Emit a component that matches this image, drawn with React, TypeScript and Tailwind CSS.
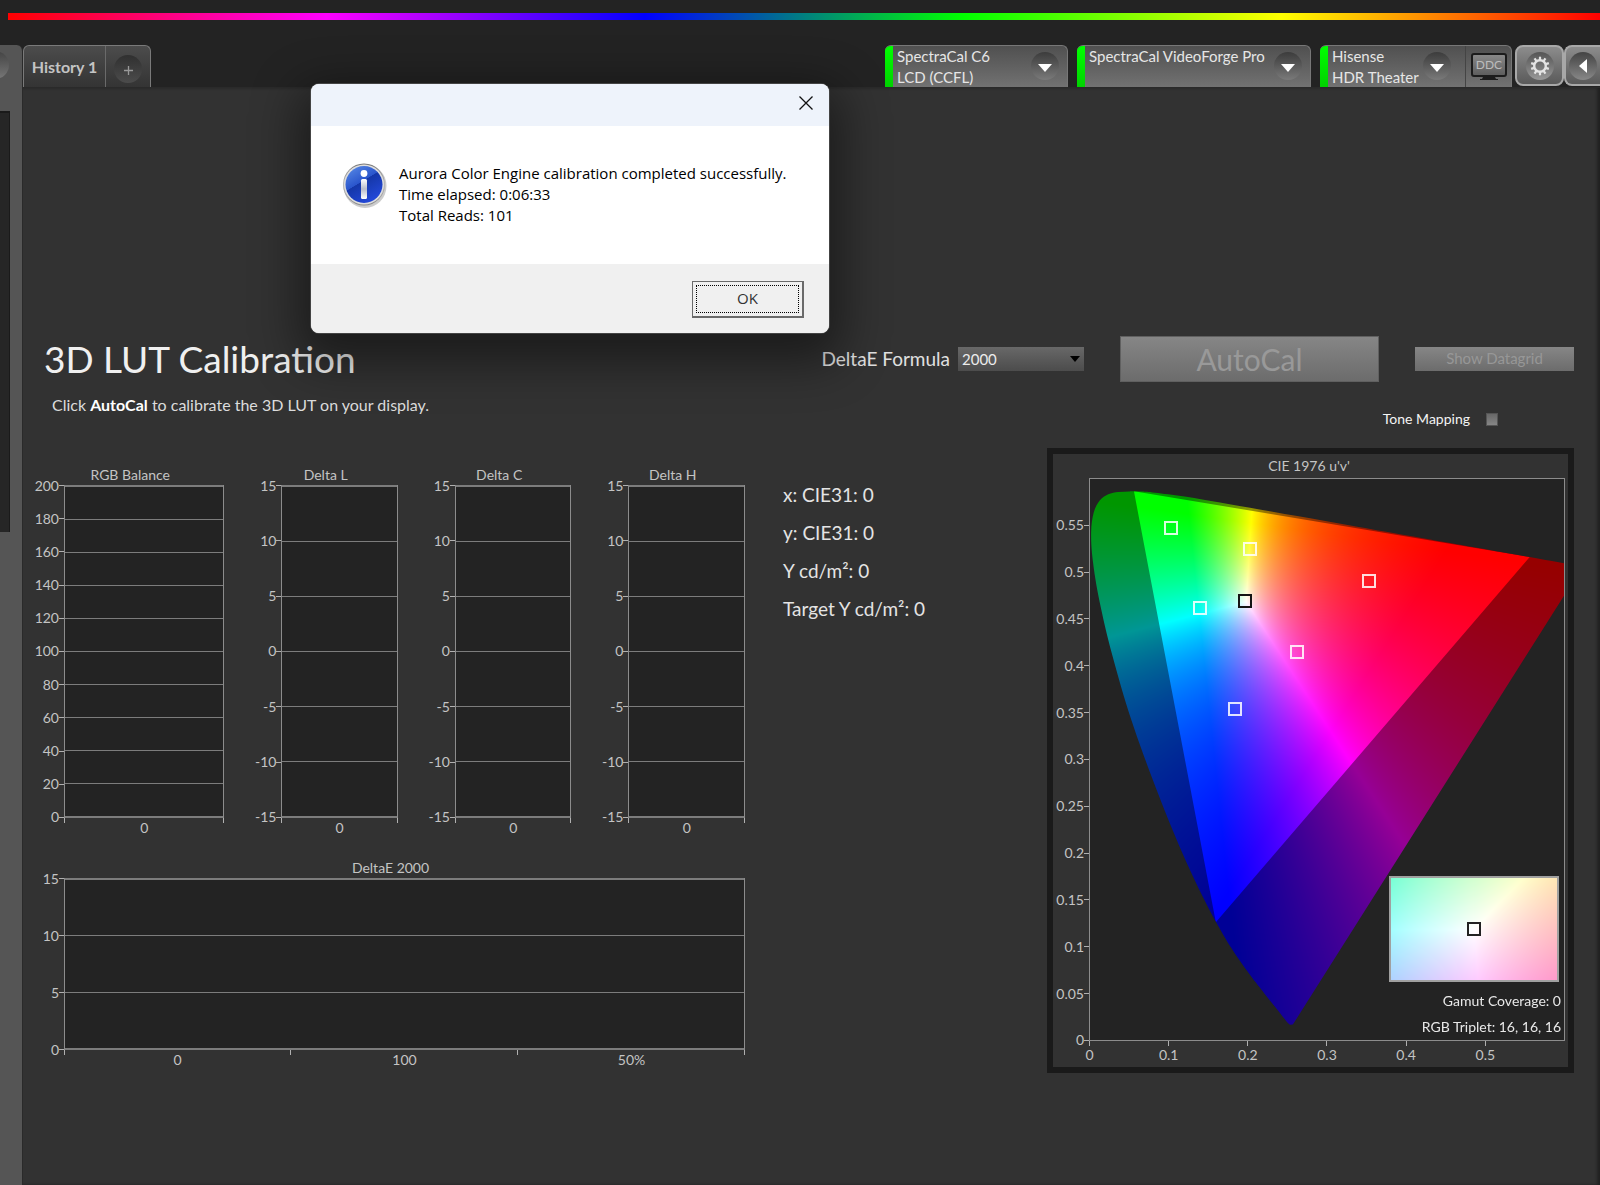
import { useLayoutEffect, useRef } from "react";

type Painter = (px: number, py: number, w: number, h: number) => [number, number];

// CIE 1931 xy of the spectral locus, 380nm to 700nm
const LOCUS = [
  [0.1741, 0.005], [0.1714, 0.0051], [0.1689, 0.0069], [0.1644, 0.0109], [0.1566, 0.0177],
  [0.151, 0.0227], [0.144, 0.0297], [0.1355, 0.0399], [0.1241, 0.0578], [0.1096, 0.0868],
  [0.0913, 0.1327], [0.0687, 0.2007], [0.0454, 0.295], [0.0235, 0.4127], [0.0082, 0.5384],
  [0.0039, 0.6548], [0.0139, 0.7502], [0.0389, 0.812], [0.0743, 0.8338], [0.1142, 0.8262],
  [0.1547, 0.8059], [0.1929, 0.7816], [0.2296, 0.7543], [0.3016, 0.6923], [0.3731, 0.6245],
  [0.4441, 0.5547], [0.5125, 0.4866], [0.5752, 0.4242], [0.627, 0.3725], [0.6915, 0.3083],
  [0.719, 0.2809], [0.7347, 0.2653],
];

const BT2020 = [
  [0.708, 0.292],
  [0.17, 0.797],
  [0.131, 0.046],
];

const MARKERS = [
  { u: 0.103, v: 0.548, border: "border-white/85" },
  { u: 0.2025, v: 0.525, border: "border-white/85" },
  { u: 0.353, v: 0.491, border: "border-white/85" },
  { u: 0.139, v: 0.462, border: "border-white/85" },
  { u: 0.262, v: 0.415, border: "border-white/85" },
  { u: 0.183, v: 0.354, border: "border-white/85" },
  { u: 0.1965, v: 0.47, border: "border-[#151515]" },
];

const toUv = ([x, y]: number[]) => {
  const d = -2 * x + 12 * y + 3;
  return [(4 * x) / d, (9 * y) / d];
};

const xyToRgb = (x: number, y: number, gamma: number) => {
  const X = x / y;
  const Z = (1 - x - y) / y;
  const rgb = [
    3.2406 * X - 1.5372 - 0.4986 * Z,
    -0.9689 * X + 1.8758 + 0.0415 * Z,
    0.0557 * X - 0.204 + 1.057 * Z,
  ].map((c) => Math.max(0, c));
  const max = Math.max(...rgb);
  return rgb.map((c) => Math.round(255 * Math.pow(c / max, 1 / gamma)));
};

function paint(canvas: HTMLCanvasElement, gamma: number, toXy: Painter) {
  const { width, height } = canvas;
  const ctx = canvas.getContext("2d")!;
  const image = ctx.createImageData(width, height);
  for (let j = 0; j < height; j++) {
    for (let i = 0; i < width; i++) {
      const [x, y] = toXy(i + 0.5, j + 0.5, width, height);
      const [r, g, b] = xyToRgb(x, y, gamma);
      image.data.set([r, g, b, 255], (j * width + i) * 4);
    }
  }
  ctx.putImageData(image, 0, 0);
  return ctx;
}

const toPixels = (points: number[][], w: number, h: number) =>
  points.map(toUv).map(([u, v]) => [(u / 0.6) * w, h - (v / 0.6) * h]);

function polygon(points: number[][]) {
  const path = new Path2D();
  points.forEach(([x, y]) => path.lineTo(x, y));
  path.closePath();
  return path;
}

// Catmull-Rom through every point, straight line back to the start
function smooth(points: number[][]) {
  const path = new Path2D();
  path.moveTo(points[0][0], points[0][1]);
  for (let i = 0; i < points.length - 1; i++) {
    const a = points[Math.max(0, i - 1)];
    const b = points[i];
    const c = points[i + 1];
    const d = points[Math.min(points.length - 1, i + 2)];
    path.bezierCurveTo(
      b[0] + (c[0] - a[0]) / 6,
      b[1] + (c[1] - a[1]) / 6,
      c[0] - (d[0] - b[0]) / 6,
      c[1] - (d[1] - b[1]) / 6,
      c[0],
      c[1],
    );
  }
  path.closePath();
  return path;
}

function LocusCanvas() {
  const ref = useRef<HTMLCanvasElement>(null);
  useLayoutEffect(() => {
    const canvas = ref.current!;
    const { width: w, height: h } = canvas;
    const ctx = paint(canvas, 1, (px, py) => {
      const u = (px / w) * 0.6;
      const v = (1 - py / h) * 0.6;
      const d = 6 * u - 16 * v + 12;
      return [(9 * u) / d, (4 * v) / d];
    });

    // dim everything outside the BT.2020 triangle
    const outside = new Path2D();
    outside.rect(0, 0, w, h);
    outside.addPath(polygon(toPixels(BT2020, w, h)));
    ctx.fillStyle = "rgba(0,0,0,0.41)";
    ctx.fill(outside, "evenodd");

    ctx.globalCompositeOperation = "destination-in";
    ctx.fillStyle = "#000";
    ctx.fill(smooth(toPixels(LOCUS, w, h)));
  }, []);
  return <canvas ref={ref} width={474} height={561} className="block h-full w-full" />;
}

function WhitePointCanvas() {
  const ref = useRef<HTMLCanvasElement>(null);
  useLayoutEffect(() => {
    paint(ref.current!, 2.2, (px, py, w, h) => [0.2627 + (px / w) * 0.1, 0.379 - (py / h) * 0.1]);
  }, []);
  return <canvas ref={ref} width={164} height={102} className="block h-full w-full" />;
}

function YAxis({ labels, width }: { labels: string[]; width: string }) {
  return (
    <div className={`flex flex-none flex-col justify-between ${width}`}>
      {labels.map((label, i) => (
        <div key={i} className="flex h-px items-center justify-end">
          <span>{label}</span>
          {label && <span className="h-px w-[5px] flex-none bg-[#b0b0b0]" />}
        </div>
      ))}
    </div>
  );
}

function BarChart({
  title,
  yLabels,
  xLabels,
  height,
}: {
  title: string;
  yLabels: string[];
  xLabels: string[];
  height: string;
}) {
  return (
    <section>
      <h2 className="text-center leading-5">{title}</h2>
      <div className={`flex ${height}`}>
        <YAxis labels={yLabels} width="w-7" />
        <div className="flex flex-1 flex-col justify-between border-x border-[#8c8c8c] bg-[#232323]">
          {yLabels.map((label) => (
            <div key={label} className="h-px bg-[#7c7c7c] first:h-0.5 last:h-0.5" />
          ))}
        </div>
      </div>
      <div className="ml-7 flex h-5 bg-[linear-gradient(#b0b0b0,#b0b0b0)] bg-[length:1px_5px] bg-no-repeat">
        {xLabels.map((label) => (
          <div
            key={label}
            className="flex-1 bg-[linear-gradient(#b0b0b0,#b0b0b0)] bg-[length:1px_5px] bg-right-top bg-no-repeat text-center leading-5"
          >
            {label}
          </div>
        ))}
      </div>
    </section>
  );
}

function CieChart() {
  const yLabels = ["", "0.55", "0.5", "0.45", "0.4", "0.35", "0.3", "0.25", "0.2", "0.15", "0.1", "0.05", "0"];
  const xLabels = ["0", "0.1", "0.2", "0.3", "0.4", "0.5", ""];
  return (
    <section className="border-[6px] border-[#1a1a1a] pr-[3px]">
      <h2 className="text-center leading-6">CIE 1976 u'v'</h2>
      <div className="flex h-[563px]">
        <YAxis labels={yLabels} width="w-9" />
        <div className="relative flex-1 border border-[#8c8c8c] bg-[#232323]">
          <LocusCanvas />
          {MARKERS.map((m) => (
            <span
              key={m.u}
              className={`absolute size-[14px] -translate-x-1/2 translate-y-1/2 border-2 ${m.border}`}
              style={{ left: `${(m.u / 0.6) * 100}%`, bottom: `${(m.v / 0.6) * 100}%` }}
            />
          ))}
          <div className="absolute right-[3px] bottom-0 flex flex-col items-end leading-[26px] text-[#e8e8e8]">
            <div className="relative mr-[2px] mb-[6px] h-[106px] w-[170px] border-2 border-[#a0a0a0]">
              <WhitePointCanvas />
              <span className="absolute top-1/2 left-1/2 size-[14px] -translate-1/2 border-2 border-[#222]" />
            </div>
            <p>Gamut Coverage: 0</p>
            <p>RGB Triplet: 16, 16, 16</p>
          </div>
        </div>
      </div>
      <div className="ml-9 flex h-[26px] justify-between">
        {xLabels.map((label, i) => (
          <div key={i} className="flex w-px flex-col items-center">
            {label && <span className="h-[5px] w-px flex-none bg-[#b0b0b0]" />}
            <span className="leading-[18px]">{label}</span>
          </div>
        ))}
      </div>
    </section>
  );
}

function RoundArrow() {
  return (
    <span className="flex size-7 flex-none items-center justify-center rounded-full bg-linear-to-b from-[#3c3c3c] to-[#7a7a7a]">
      <svg width="14" height="8" viewBox="0 0 14 8" fill="#fff" className="mt-1">
        <path d="M0 0h14L7 8z" />
      </svg>
    </span>
  );
}

function DeviceTab({ lines, box, children }: { lines: string[]; box: string; children?: React.ReactNode }) {
  return (
    <div
      className={`flex overflow-hidden rounded-t-md border-t border-r border-[#777] bg-linear-to-b from-[#505050] to-[#727272] ${box}`}
    >
      <span className="w-2 flex-none bg-linear-to-b from-[#00ff00] to-[#00d200]" />
      <button className={`flex flex-1 items-start pl-1 text-left ${children ? "pr-[14px]" : "pr-2"}`}>
        <span className="flex-1 text-[15px] leading-[21px] whitespace-nowrap text-[#e6e6e6]">
          {lines.map((line) => (
            <span key={line} className="block">
              {line}
            </span>
          ))}
        </span>
        <span className="pt-[6px]">
          <RoundArrow />
        </span>
      </button>
      {children}
    </div>
  );
}

function Header() {
  return (
    <div className="flex h-[42px] items-stretch">
      <div className="flex rounded-t-md border border-b-0 border-[#7a7a7a] bg-linear-to-b from-[#4c4c4c] to-[#343434]">
        <button className="w-[82px] border-r border-[#6a6a6a] pt-px text-base font-bold text-[#c4c4c4]">History 1</button>
        <button aria-label="Add history" className="flex w-11 items-center justify-center">
          <span className="mt-1 flex size-7 items-center justify-center rounded-full bg-linear-to-b from-[#303030] to-[#4c4c4c]">
            <svg width="9" height="9" viewBox="0 0 9 9" stroke="#999" strokeWidth="1.3" className="mt-1">
              <path d="M4.5 0v9M0 4.5h9" />
            </svg>
          </span>
        </button>
      </div>

      <div className="ml-auto flex">
        <DeviceTab box="w-[183px]" lines={["SpectraCal C6", "LCD (CCFL)"]} />
        <DeviceTab box="ml-[9px] w-[234px]" lines={["SpectraCal VideoForge Pro"]} />
        <DeviceTab box="ml-[9px] w-[192px]" lines={["Hisense", "HDR Theater"]}>
          <button className="flex w-[46px] items-center justify-center border-l border-[#444]">
            <svg width="36" height="28" viewBox="0 0 36 28">
              <defs>
                <linearGradient id="screen" x1="0" y1="0" x2="0" y2="1">
                  <stop offset="0" stopColor="#8a8a8a" />
                  <stop offset="1" stopColor="#5c5c5c" />
                </linearGradient>
              </defs>
              <rect x="1" y="1" width="34" height="22" rx="2" fill="url(#screen)" stroke="#1c1c1c" strokeWidth="2" />
              <path d="M12 24h12l1 2h2v1H9v-1h2z" fill="#1c1c1c" />
              <text x="18" y="16" textAnchor="middle" fontSize="12" fontFamily="Lato" fill="#bcbcbc">
                DDC
              </text>
            </svg>
          </button>
        </DeviceTab>
      </div>

      <div className="ml-[3px] flex h-[41px] flex-none">
        <button
          aria-label="Settings"
          className="flex w-[49px] items-center justify-center rounded-lg border-2 border-[#a8a8a8] bg-linear-to-b from-[#8c8c8c] to-[#5a5a5a]"
        >
          <span className="flex size-7 items-center justify-center rounded-full bg-linear-to-b from-[#555] to-[#999]">
            <svg width="20" height="20" viewBox="-10 -10 20 20" fill="none" stroke="#e4e4e4">
              <circle r="5.8" strokeWidth="2.4" />
              {[0, 36, 72, 108, 144, 180, 216, 252, 288, 324].map((a) => (
                <path key={a} d="M0 -6v-3.300" strokeWidth="2.2" transform={`rotate(${a})`} />
              ))}
            </svg>
          </span>
        </button>
        <button
          aria-label="Collapse"
          className="flex w-9 items-center justify-center rounded-l-lg border-2 border-r-0 border-[#a8a8a8] bg-linear-to-b from-[#8c8c8c] to-[#5a5a5a]"
        >
          <span className="flex size-7 items-center justify-center rounded-full bg-linear-to-b from-[#444] to-[#888]">
            <svg width="8" height="14" viewBox="0 0 8 14" fill="#fff">
              <path d="M8 0v14L0 7z" />
            </svg>
          </span>
        </button>
      </div>
    </div>
  );
}

function InfoIcon() {
  return (
    <svg width="44" height="46" viewBox="0 0 44 46" className="flex-none">
      <defs>
        <linearGradient id="ball" x1="0" y1="0" x2="0.6" y2="1">
          <stop offset="0" stopColor="#5c8fe8" />
          <stop offset="0.5" stopColor="#2a55cc" />
          <stop offset="0.51" stopColor="#1537a8" />
          <stop offset="1" stopColor="#2348d8" />
        </linearGradient>
        <linearGradient id="rim" x1="0" y1="0" x2="0" y2="1">
          <stop offset="0" stopColor="#777" />
          <stop offset="0.5" stopColor="#b8b8b8" />
          <stop offset="1" stopColor="#8a8a8a" />
        </linearGradient>
        <linearGradient id="stem" x1="0" y1="0" x2="0" y2="1">
          <stop offset="0" stopColor="#fff" />
          <stop offset="0.5" stopColor="#b8bccb" />
          <stop offset="1" stopColor="#fff" />
        </linearGradient>
      </defs>
      <ellipse cx="22" cy="23" rx="21.5" ry="22" fill="#0003" />
      <circle cx="21" cy="21.5" r="21" fill="url(#rim)" />
      <circle cx="21" cy="21.5" r="20" fill="#dedede" />
      <circle cx="21" cy="21.5" r="18.5" fill="url(#ball)" />
      <circle cx="21" cy="10.5" r="3.4" fill="#fff" />
      <rect x="18" y="16" width="6" height="20" rx="1.500" fill="url(#stem)" />
    </svg>
  );
}

function Dialog() {
  return (
    <div
      role="dialog"
      aria-label="Calibration result"
      className="absolute top-[84px] left-[311px] w-[518px] overflow-hidden rounded-lg bg-white font-['Open_Sans',sans-serif] text-[15px] text-black shadow-[0_0_0_1px_#444,0_16px_48px_12px_#0007]"
    >
      <div className="flex h-[42px] items-center justify-end bg-[#eef3fb] pr-4 pb-1">
        <button aria-label="Close">
          <svg width="14" height="14" viewBox="0 0 14 14" stroke="#111" strokeWidth="1.3">
            <path d="M0.500 0.500l13 13M13.500 0.500l-13 13" />
          </svg>
        </button>
      </div>
      <div className="flex h-[138px] items-start gap-3 px-8 pt-[37px]">
        <InfoIcon />
        <p className="leading-[21px] whitespace-nowrap">
          Aurora Color Engine calibration completed successfully.
          <br />
          Time elapsed: 0:06:33
          <br />
          Total Reads: 101
        </p>
      </div>
      <div className="flex h-[69px] items-center justify-end bg-[#f0f0f0] pt-px pr-[25px]">
        <button className="h-[37px] w-[112px] border border-r-2 border-b-2 border-[#6a6a6a] p-[3px]">
          <span className="flex h-full items-center justify-center border border-dotted border-black text-[#333]">OK</span>
        </button>
      </div>
    </div>
  );
}

export default function App() {
  const deltaLabels = ["15", "10", "5", "0", "-5", "-10", "-15"];
  const rgbLabels = ["200", "180", "160", "140", "120", "100", "80", "60", "40", "20", "0"];
  return (
    <div className="relative flex min-h-screen flex-col overflow-hidden bg-[#232323] font-[Lato,sans-serif] text-sm text-[#c4c4c4]">
      <div className="mt-[13px] ml-2 h-[7px] bg-[linear-gradient(90deg,#f00,#f0f,#00f,#0f0,#ff0,#f00)]" />
      <div className="mt-[25px] flex flex-1">
        <aside className="w-[23px] flex-none overflow-hidden rounded-tr-md border-r border-[#2a2a2a] bg-[#555]">
          <div className="mt-[6px] -ml-[19px] size-7 rounded-full bg-linear-to-b from-[#444] to-[#777]" />
          <div className="mt-8 h-[421px] w-[10px] border-t-2 border-r border-[#1a1a1a] bg-[#262626]" />
        </aside>

        <div className="flex min-w-0 flex-1 flex-col">
          <Header />
          <main className="flex-1 border-t border-[#2a2a2a] bg-[#323232] pt-[248px] pr-[26px] pb-10 pl-[13px] shadow-[inset_-3px_0_3px_#0005]">
            <div className="flex h-[46px] items-center">
              <h1 className="ml-2 text-[37px] text-[#f0f0f0]">3D LUT Calibration</h1>
              <label htmlFor="formula" className="mr-2 ml-auto text-[19px] text-[#e0e0e0]">
                DeltaE Formula
              </label>
              <span className="relative">
                <select
                  id="formula"
                  className="block h-6 w-[126px] appearance-none bg-linear-to-b from-[#686868] to-[#4c4c4c] px-1 text-[15px] leading-6 text-[#ececec]"
                >
                  <option>2000</option>
                </select>
                <svg width="10" height="6" viewBox="0 0 10 6" className="pointer-events-none absolute top-[9px] right-1">
                  <path d="M0 0h10L5 6z" />
                </svg>
              </span>
              <button
                disabled
                className="ml-9 h-[46px] w-[259px] border border-[#606060] bg-linear-to-b from-[#868686] to-[#6c6c6c] text-3xl leading-none text-[#999]"
              >
                AutoCal
              </button>
              <button
                disabled
                className="ml-9 h-6 w-[159px] bg-linear-to-b from-[#868686] to-[#6c6c6c] text-[15px] text-[#979797]"
              >
                Show Datagrid
              </button>
            </div>

            <div className="mb-[18px] flex items-start justify-between pt-3 pl-4 leading-[22px] text-[#dcdcdc]">
              <p className="text-base leading-[22px]">
                Click <b className="font-bold text-white">AutoCal</b> to calibrate the 3D LUT on your display.
              </p>
              <label className="mt-[14px] mr-[76px] flex items-center gap-4 text-[#f4f4f4]">
                Tone Mapping
                <input
                  type="checkbox"
                  className="h-[13px] w-3 appearance-none border border-[#555] bg-linear-to-b from-[#686868] to-[#868686]"
                />
              </label>
            </div>

            <div className="grid grid-cols-[709fr_302fr_527fr] items-start">
              <div className="pt-[17px]">
                <div className="grid grid-cols-[189fr_145fr_145fr_145fr] gap-[29px]">
                  <BarChart title="RGB Balance" yLabels={rgbLabels} xLabels={["0"]} height="h-[333px]" />
                  <BarChart title="Delta L" yLabels={deltaLabels} xLabels={["0"]} height="h-[333px]" />
                  <BarChart title="Delta C" yLabels={deltaLabels} xLabels={["0"]} height="h-[333px]" />
                  <BarChart title="Delta H" yLabels={deltaLabels} xLabels={["0"]} height="h-[333px]" />
                </div>
                <div className="mt-5">
                  <BarChart
                    title="DeltaE 2000"
                    yLabels={["15", "10", "5", "0"]}
                    xLabels={["0", "100", "50%"]}
                    height="h-[172px]"
                  />
                </div>
              </div>

              <div className="pt-7 pl-[38px] text-[19px] leading-[38px] text-[#e4e4e4]">
                <p>x: CIE31: 0</p>
                <p>y: CIE31: 0</p>
                <p>Y cd/m²: 0</p>
                <p>Target Y cd/m²: 0</p>
              </div>

              <CieChart />
            </div>
          </main>
        </div>
      </div>

      <Dialog />
    </div>
  );
}
